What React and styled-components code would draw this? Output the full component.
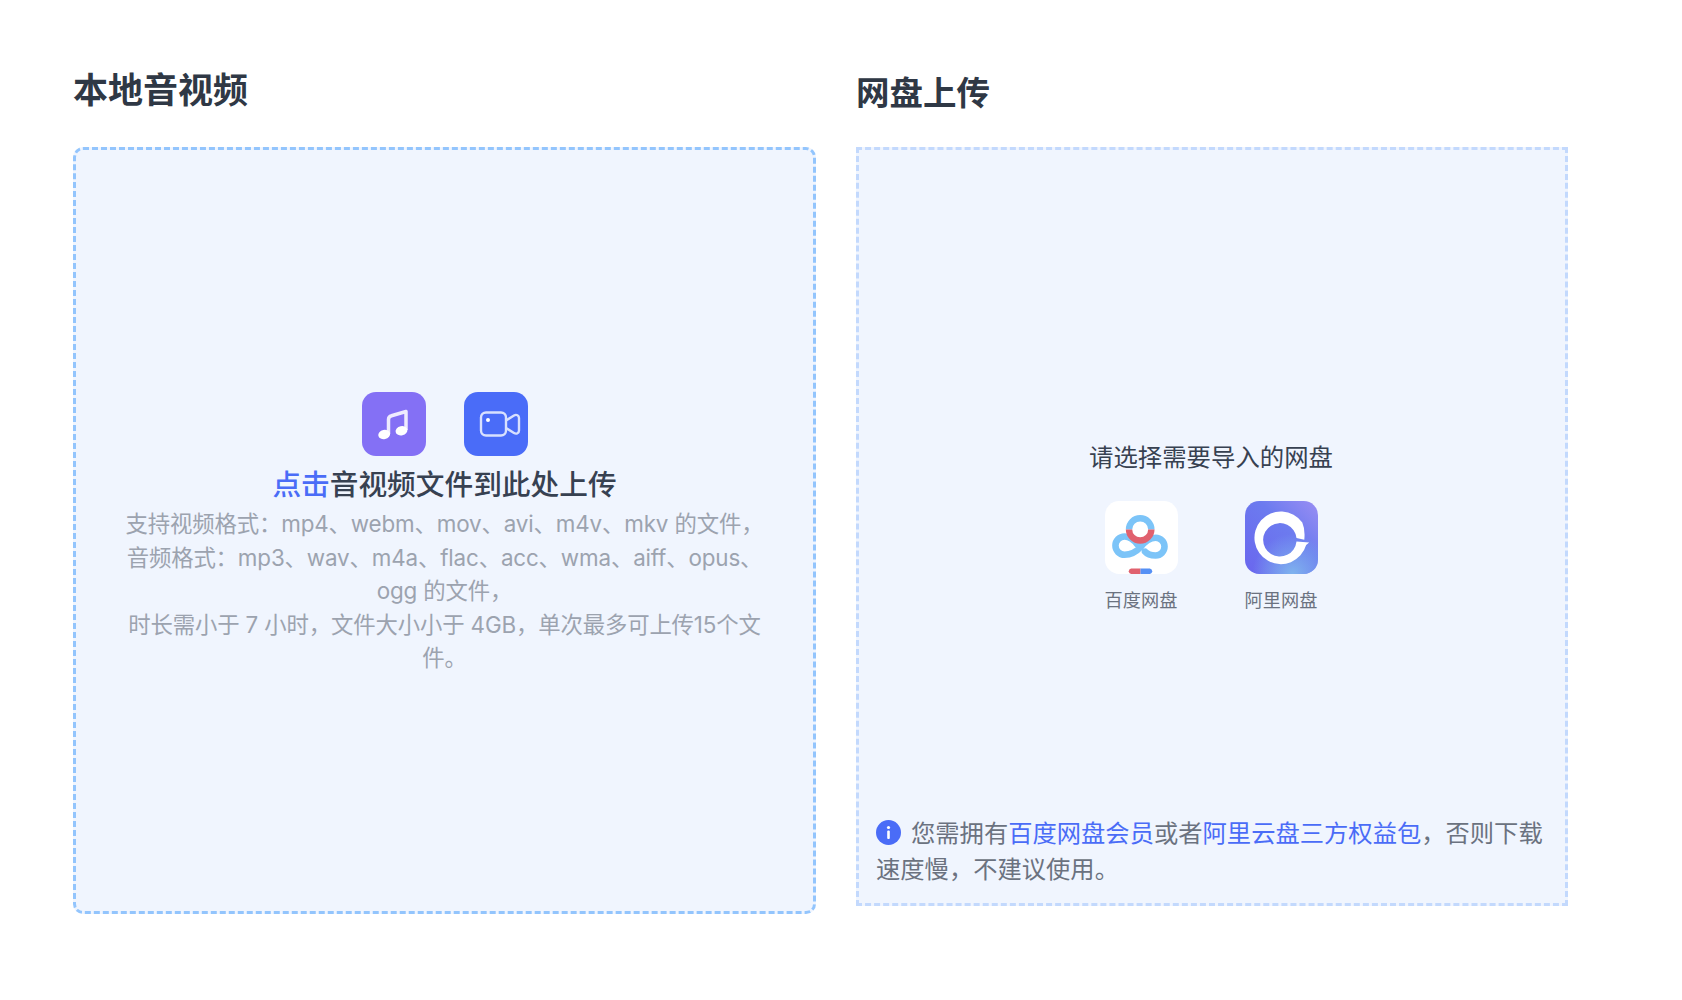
import React from 'react'
import styled, { createGlobalStyle } from 'styled-components'

const Global = createGlobalStyle`
  html, body {
    margin: 0;
    background: #fff;
    font-family: Inter, "Noto Sans CJK SC", sans-serif;
  }
`
const Page = styled.div`
  display: flex;
  gap: 40px;
  padding: 0 112px 0 73px;
  height: 1000px;
  box-sizing: border-box;
`
const Column = styled.section`
  width: ${props => props.width}px;
  flex: none;
`
const Title = styled.h2`
  margin: 0;
  height: 147px;
  padding-top: ${props => props.top}px;
  box-sizing: border-box;
  font-size: ${props => props.size}px;
  line-height: 44px;
  font-weight: 700;
  color: #2f3845;
`
const LocalBox = styled.div`
  height: 767px;
  box-sizing: border-box;
  border: 3px dashed #93c5fd;
  border-radius: 10px;
  background: #f0f5fe;
  display: flex;
  flex-direction: column;
  align-items: center;
  justify-content: center;
  padding: 6px 43px 0;
`
const IconRow = styled.div`
  display: flex;
  gap: 38px;
`
const FileIcon = styled.svg`
  display: block;
  width: 64px;
  height: 64px;
  border-radius: 14px;
  background: ${props => props.color};
`
const Heading = styled.div`
  margin-top: 9px;
  font-size: 28.7px;
  line-height: 40px;
  font-weight: 500;
  color: #374151;
`
const Blue = styled.span`
  color: #4a6cf7;
`
const Desc = styled.p`
  margin: 2px 0 0;
  font-size: 22.4px;
  line-height: 33.6px;
  letter-spacing: -0.15px;
  color: #9ca3af;
  text-align: center;
`
const CloudBox = styled.div`
  height: 759px;
  box-sizing: border-box;
  border: 3px dashed #c3d9fd;
  background: #f0f5fe;
  display: grid;
  grid-template-rows: 1fr auto 1fr;
  padding: 14px 19px 16px 17px;
`
const Picker = styled.div`
  grid-row: 2;
  display: flex;
  flex-direction: column;
  align-items: center;
`
const PickerTitle = styled.div`
  font-size: 24.4px;
  line-height: 36px;
  color: #374151;
`
const DriveRow = styled.div`
  display: flex;
  gap: 67px;
  margin-top: 26px;
`
const Drive = styled.div`
  display: flex;
  flex-direction: column;
  align-items: center;
  gap: 13px;
  font-size: 18.2px;
  line-height: 26px;
  color: #6b7280;
`
const DriveLogo = styled.svg`
  display: block;
  width: 73px;
  height: 73px;
`
const Note = styled.p`
  grid-row: 3;
  align-self: end;
  margin: 0;
  font-size: 24.3px;
  line-height: 36px;
  color: #6b7280;
`
const InfoIcon = styled.svg`
  display: inline-block;
  width: 25px;
  height: 25px;
  margin-right: 10px;
  vertical-align: -3px;
`

const MusicIcon = () => (
  <FileIcon color="#8470f5" viewBox="0 0 64 64" fill="none">
    <path d="M26.500 42V27.500c0-2 1-3.200 3-3.700L44 19.500V38" stroke="#eeebfe" strokeWidth="3.500" strokeLinejoin="round" />
    <ellipse cx="22.200" cy="42.500" rx="6" ry="4.600" fill="#fff" transform="rotate(-12 22.200 42.500)" />
    <ellipse cx="39.500" cy="38.800" rx="6" ry="4.600" fill="#fff" transform="rotate(-12 39.500 38.800)" />
  </FileIcon>
)

const VideoIcon = () => (
  <FileIcon color="#4a6cf8" viewBox="0 0 64 64" fill="none">
    <g stroke="#d8e0fe" strokeWidth="2.400" strokeLinejoin="round">
      <rect x="17" y="20.500" width="25" height="23" rx="5" />
      <path d="M42 28.500l8-5c2.500-1.500 5 0 5 2.500v12.500c0 2.500-2.500 4-5 2.500l-8-5" />
    </g>
    <circle cx="24" cy="28" r="2" fill="#fff" />
  </FileIcon>
)

const BaiduLogo = () => (
  <DriveLogo viewBox="0 0 72 72" fill="none">
    <rect width="72" height="72" rx="14" fill="#fff" />
    <path d="M39.500 50C42 53 46 53.700 50 53.700A8.700 8.700 0 0 0 50 36.300C44 36.300 39 40.500 35 45.500C31 50 26 53 19.300 53A9 9 0 0 1 19.300 35C25 35 29 39 32 43" stroke="#7cc4f8" strokeWidth="6.500" strokeLinecap="round" />
    <path d="M23.700 28A11 11 0 0 1 45.700 28" stroke="#7cc4f8" strokeWidth="6.300" />
    <path d="M23.700 28A11 11 0 0 0 45.700 28" stroke="#e0616e" strokeWidth="6.300" />
    <path d="M35 66.500H25.700a2.800 2.800 0 0 0 0 5.500H35z" fill="#e0616e" />
    <path d="M35 66.500h9.300a2.800 2.800 0 0 1 0 5.500H35z" fill="#5590f5" />
  </DriveLogo>
)

const AliLogo = () => (
  <DriveLogo viewBox="0 0 72 72" fill="none">
    <defs>
      <linearGradient id="ali" x1="0" y1="1" x2="1" y2="0">
        <stop offset="0" stopColor="#6a66ee" />
        <stop offset="0.6" stopColor="#6c7bef" />
        <stop offset="1" stopColor="#9a8ef3" />
      </linearGradient>
      <radialGradient id="aliGlow" cx="0.65" cy="1" r="0.55">
        <stop offset="0" stopColor="#7fb4ee" />
        <stop offset="1" stopColor="#7fb4ee" stopOpacity="0" />
      </radialGradient>
    </defs>
    <rect width="72" height="72" rx="14" fill="url(#ali)" />
    <rect width="72" height="72" rx="14" fill="url(#aliGlow)" />
    <path d="M60.300 43.500A26 26 0 1 1 56.500 21.200Q59.500 28 58.500 38.300L50.800 36.600A16.500 16.500 0 1 0 50.800 40L63.300 41Z" fill="#fff" />
  </DriveLogo>
)

const App = () => (
  <Page>
    <Global />
    <Column width={743}>
      <Title size={35} top={68}>本地音视频</Title>
      <LocalBox>
        <IconRow>
          <MusicIcon />
          <VideoIcon />
        </IconRow>
        <Heading><Blue>点击</Blue>音视频文件到此处上传</Heading>
        <Desc>
          支持视频格式：mp4、webm、mov、avi、m4v、mkv 的文件，<br />
          音频格式：mp3、wav、m4a、flac、acc、wma、aiff、opus、ogg 的文件，<br />
          时长需小于 7 小时，文件大小小于 4GB，单次最多可上传15个文件。
        </Desc>
      </LocalBox>
    </Column>
    <Column width={712}>
      <Title size={33.5} top={71}>网盘上传</Title>
      <CloudBox>
        <Picker>
          <PickerTitle>请选择需要导入的网盘</PickerTitle>
          <DriveRow>
            <Drive><BaiduLogo />百度网盘</Drive>
            <Drive><AliLogo />阿里网盘</Drive>
          </DriveRow>
        </Picker>
        <Note>
          <InfoIcon viewBox="0 0 25 25">
            <circle cx="12.500" cy="12.500" r="12.500" fill="#4a6cf7" />
            <circle cx="12.500" cy="7.500" r="1.600" fill="#fff" />
            <rect x="11.200" y="10.500" width="2.600" height="8.500" rx="1" fill="#fff" />
          </InfoIcon>
          您需拥有<Blue>百度网盘会员</Blue>或者<Blue>阿里云盘三方权益包</Blue>，否则下载速度慢，不建议使用。
        </Note>
      </CloudBox>
    </Column>
  </Page>
)

export default App
